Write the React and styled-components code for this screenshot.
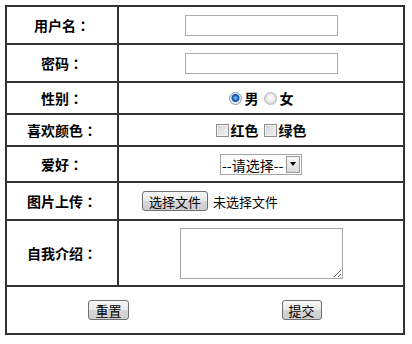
import React from "react";
import styled, { createGlobalStyle } from "styled-components";

const Global = createGlobalStyle`
  html, body { margin: 0; padding: 0; background: #fff; }
  body { padding: 5px 0 0 5px; font-family: "Noto Sans CJK SC", "Noto Sans", sans-serif; color: #000; }
  * { box-sizing: border-box; }
`;

const Form = styled.form`
  display: grid;
  grid-template-columns: 112px 286px;
  width: 400px;
  border-top: 2px solid #333;
  border-left: 2px solid #333;
`;

const Cell = styled.div`
  height: ${(p) => p.$h}px;
  border-right: 2px solid #333;
  border-bottom: 2px solid #333;
  display: flex;
  align-items: center;
  justify-content: center;
  font-size: 14px;
  line-height: 1;
`;

const LabelCell = styled(Cell)`
  font-weight: bold;
`;

const Colon = styled.span`
  font-family: "Noto Sans CJK TC", "Noto Sans CJK SC", sans-serif;
`;

const FullCell = styled(Cell)`
  grid-column: 1 / -1;
  gap: 153px;
`;

const TextInput = styled.input`
  width: 153px;
  height: 21px;
  border: 1px solid #ababab;
  padding: 1px 2px;
  font-size: 13px;
  font-family: inherit;
  outline: none;
`;

const ChoiceLabel = styled.label`
  display: inline-flex;
  align-items: center;
  font-weight: bold;
  font-size: 14px;
  margin-right: ${(p) => p.$gap || 0}px;
`;

const Radio = styled.input.attrs({ type: "radio" })`
  appearance: none;
  width: 13px;
  height: 13px;
  margin: 0 3px 0 0;
  border-radius: 50%;
  border: 1px solid #b4b4b4;
  background: radial-gradient(circle at 50% 45%, #ffffff 0, #f0f0f0 3px, #d8d8d8 6px);
  &:checked {
    border-color: #8a9bb0;
    background: radial-gradient(circle at 50% 45%, #9fd0ff 0, #2c7ad6 2px, #174f9c 3.6px, #dfe6ee 4.4px, #f4f4f4 6px);
  }
`;

const Check = styled.input.attrs({ type: "checkbox" })`
  appearance: none;
  width: 13px;
  height: 13px;
  margin: 0 2px 0 0;
  border: 1px solid #8f8f8f;
  background: linear-gradient(135deg, #d2d2d2, #f4f4f4);
  box-shadow: inset 0 0 0 1px #f2f2f2;
`;

const SelectBox = styled.span`
  position: relative;
  display: inline-block;
  width: 82px;
  height: 21px;
  border: 1px solid #a5a5a5;
  background: #fff;
`;

const Select = styled.select`
  appearance: none;
  border: none;
  outline: none;
  background: transparent;
  width: 100%;
  height: 100%;
  padding: 0 0 0 1px;
  font-size: 14px;
  font-family: inherit;
  color: #000;
`;

const Arrow = styled.span`
  position: absolute;
  right: 1px;
  top: 1px;
  width: 14px;
  height: 17px;
  border: 1px solid #9a9a9a;
  background: linear-gradient(#f8f8f8, #d9d9d9);
  pointer-events: none;
  display: flex;
  align-items: center;
  justify-content: center;
  &::after {
    content: "";
    border-left: 3.5px solid transparent;
    border-right: 3.5px solid transparent;
    border-top: 4px solid #000;
  }
`;

const Button = styled.button`
  height: 20px;
  padding: 0 6px;
  font-size: 13px;
  font-family: inherit;
  line-height: 1;
  color: #000;
  border: 1px solid #707070;
  border-radius: 3px;
  background: linear-gradient(#f6f6f6, #e8e8e8 50%, #d6d6d6 51%, #cfcfcf);
  cursor: pointer;
`;

const FileBox = styled.label`
  width: 238px;
  display: flex;
  align-items: center;
  gap: 5px;
  font-size: 13px;
  input { display: none; }
`;

const FileButton = styled(Button).attrs({ as: "span" })`
  display: inline-flex;
  align-items: center;
`;

const TextArea = styled.textarea`
  width: 163px;
  height: 51px;
  border: 1px solid #a5a5a5;
  font-family: inherit;
  font-size: 13px;
  outline: none;
`;

const rows = [38, 38, 32, 32, 36, 38, 66, 48];

const Label = ({ h, children }) => (
  <LabelCell $h={h}>
    {children}
    <Colon>：</Colon>
  </LabelCell>
);

export default function App() {
  return (
    <>
      <Global />
      <Form onSubmit={(e) => e.preventDefault()}>
        <Label h={rows[0]}>用户名</Label>
        <Cell $h={rows[0]}>
          <TextInput type="text" />
        </Cell>

        <Label h={rows[1]}>密码</Label>
        <Cell $h={rows[1]}>
          <TextInput type="password" />
        </Cell>

        <Label h={rows[2]}>性别</Label>
        <Cell $h={rows[2]}>
          <ChoiceLabel $gap={5}>
            <Radio name="sex" defaultChecked />男
          </ChoiceLabel>
          <ChoiceLabel>
            <Radio name="sex" />女
          </ChoiceLabel>
        </Cell>

        <Label h={rows[3]}>喜欢颜色</Label>
        <Cell $h={rows[3]}>
          <ChoiceLabel $gap={5}>
            <Check />红色
          </ChoiceLabel>
          <ChoiceLabel>
            <Check />绿色
          </ChoiceLabel>
        </Cell>

        <Label h={rows[4]}>爱好</Label>
        <Cell $h={rows[4]}>
          <SelectBox>
            <Select defaultValue="">
              <option value="">--请选择--</option>
              <option value="read">读书</option>
              <option value="sport">运动</option>
            </Select>
            <Arrow />
          </SelectBox>
        </Cell>

        <Label h={rows[5]}>图片上传</Label>
        <Cell $h={rows[5]}>
          <FileBox>
            <input type="file" />
            <FileButton>选择文件</FileButton>
            <span>未选择文件</span>
          </FileBox>
        </Cell>

        <Label h={rows[6]}>自我介绍</Label>
        <Cell $h={rows[6]}>
          <TextArea />
        </Cell>

        <FullCell $h={rows[7]}>
          <Button type="reset">重置</Button>
          <Button type="submit">提交</Button>
        </FullCell>
      </Form>
    </>
  );
}
